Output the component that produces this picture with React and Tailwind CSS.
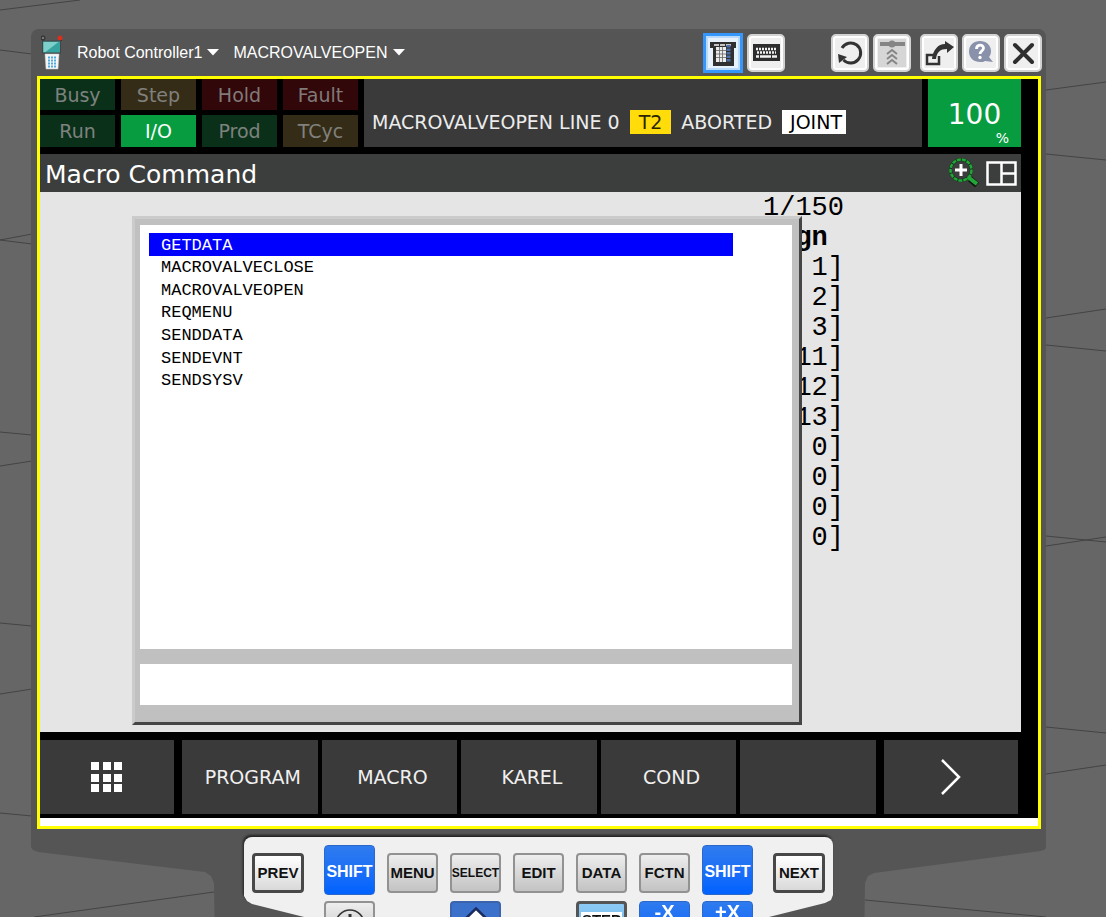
// App.jsx
import React from "react";

const INDICATORS = [
  { label: "Busy", tone: "bg-[#0b301a] text-[#7d827e]" },
  { label: "Step", tone: "bg-[#342c17] text-[#80807c]" },
  { label: "Hold", tone: "bg-[#320709] text-[#807a7a]" },
  { label: "Fault", tone: "bg-[#320709] text-[#807a7a]" },
  { label: "Run", tone: "bg-[#0b301a] text-[#7d827e]" },
  { label: "I/O", tone: "bg-[#089c40] text-white" },
  { label: "Prod", tone: "bg-[#0b301a] text-[#7d827e]" },
  { label: "TCyc", tone: "bg-[#342c17] text-[#80807c]" },
];

const PROGRAMS = [
  "GETDATA",
  "MACROVALVECLOSE",
  "MACROVALVEOPEN",
  "REQMENU",
  "SENDDATA",
  "SENDEVNT",
  "SENDSYSV",
];

const ASSIGNMENTS = [1, 2, 3, 11, 12, 13, 0, 0, 0, 0];

const SOFT_KEYS = ["PROGRAM", "MACRO", "KAREL", "COND", ""];

// Floor grid of the 3D cell behind the pendant
function FloorLines() {
  return (
    <svg
      className="absolute inset-0 h-full w-full"
      viewBox="0 0 1106 917"
      preserveAspectRatio="none"
      fill="none"
      stroke="#444"
      aria-hidden="true"
    >
      <path d="M0 10 80 0M0 50 32 54M0 240 32 234M0 240 32 244M0 432 32 435M0 466 32 461M0 623 32 626M0 694 32 689M0 813 32 816M34 917 214 892" />
      <path d="M1046 90 1106 82M1046 154 1106 160M1046 318 1106 309M1046 345 1106 351M1046 536 1106 542M1046 546 1106 537M1046 727 1106 733M1046 774 1106 765M865 900 1046 917" />
    </svg>
  );
}

function PendantIcon() {
  return (
    <svg width="22" height="36" viewBox="0 0 22 36" aria-hidden="true">
      <path d="M2 6V3M20 6V3" stroke="#333" strokeWidth="2" />
      <circle cx="2" cy="3" r="2" fill="#777" stroke="#222" />
      <circle cx="19" cy="3" r="2.5" fill="#d8301c" />
      <rect x="1.5" y="6" width="18" height="12" fill="#35a3a0" stroke="#444" />
      <path d="M2.5 7h15l-13 10h-2z" fill="#7ccfca" />
      <path d="M4 19h14l-1 15H5z" fill="#f4f6f8" stroke="#ccc" strokeWidth="0.5" />
      <path d="M7 22.5h8M7 25.5h8M7 28.5h8M7 31.5h8" stroke="#53a9de" strokeWidth="2" strokeDasharray="2 1" />
    </svg>
  );
}

function Caret() {
  return (
    <svg width="12" height="7" viewBox="0 0 12 7" fill="#fff" aria-hidden="true">
      <path d="M0 0h12L6 6.5z" />
    </svg>
  );
}

function ToolButton({ label, children }) {
  return (
    <button
      type="button"
      aria-label={label}
      className="flex size-[38px] items-center justify-center rounded-[5px] border-2 border-[#d2d2d2] bg-[#efefef] shadow-[inset_0_0_0_2px_#fff]"
    >
      {children}
    </button>
  );
}

function ToolIcon({ children }) {
  return (
    <svg width="30" height="30" viewBox="0 0 30 30" fill="none" className="shrink-0" aria-hidden="true">
      {children}
    </svg>
  );
}

function TitleBar() {
  return (
    <header className="flex h-[47px] items-center rounded-t-lg pr-1 pl-[10px] font-['Liberation_Sans',sans-serif] text-base text-white">
      <PendantIcon />
      <button type="button" className="ml-[14px] flex items-center gap-[5px] whitespace-nowrap">
        Robot Controller1
        <Caret />
      </button>
      <button type="button" className="ml-[14px] flex items-center gap-[5px] whitespace-nowrap">
        MACROVALVEOPEN
        <Caret />
      </button>

      <div className="ml-auto flex items-center gap-1">
        <button
          type="button"
          aria-label="Teach pendant"
          aria-pressed="true"
          className="flex size-10 items-center justify-center border-3 border-[#3596fb] bg-[#e6f1fc] shadow-[inset_0_0_0_2px_#b9dafa]"
        >
          <ToolIcon>
            <path d="M2 4h26v6h-2v18H5V10H2z" fill="#303030" />
            <path d="M6 7h18" stroke="#c4c4c4" strokeWidth="2" strokeDasharray="5 1" />
            <rect x="8" y="9" width="10" height="15" fill="#ececec" />
            <path d="M11.5 9v15M14.5 9v15M8 12.5h10M8 16h10M8 19.5h10" stroke="#666" strokeWidth="0.8" />
            <path d="M20.5 7v17" stroke="#4d6fa8" strokeWidth="4" strokeDasharray="2.5 1" />
          </ToolIcon>
        </button>
        <ToolButton label="Keyboard">
          <ToolIcon>
            <rect x="2" y="6" width="27" height="17" fill="#2e2e2e" />
            <path d="M5 11h21M6 14.5h19" stroke="#f2f2f2" strokeWidth="2.5" strokeDasharray="2 1" />
            <path d="M5 18.5h3M9 18.5h11M21 18.5h5" stroke="#f2f2f2" strokeWidth="2.5" />
          </ToolIcon>
        </ToolButton>

        <div className="ml-[42px] flex gap-1">
          <ToolButton label="Reset">
            <ToolIcon>
              <path d="M7 10a10 10 0 1 1 1.5 12" stroke="#333" strokeWidth="3" />
              <path d="M3 16l9 3-8 6z" fill="#333" />
            </ToolIcon>
          </ToolButton>
          <ToolButton label="Hide panel">
            <ToolIcon>
              <path d="M1 1h28v28H1z" fill="#d6d6d6" />
              <path d="M3 6h25" stroke="#858585" strokeWidth="4" />
              <circle cx="15" cy="6" r="3.5" fill="#858585" />
              <path d="M10 16l5-4 5 4M10 21l5-4 5 4M10 26l5-4 5 4" stroke="#858585" strokeWidth="2" />
            </ToolIcon>
          </ToolButton>
        </div>

        <div className="ml-[5px] flex gap-1">
          <ToolButton label="Undock">
            <ToolIcon>
              <path d="M15 18v8H3V17h7" stroke="#333" strokeWidth="2.5" />
              <path d="M8 21C9 12 14 6 21 6V3l9 6-7 6v-4c-7 0-10 3-11 10z" fill="#333" />
            </ToolIcon>
          </ToolButton>
          <ToolButton label="Help">
            <ToolIcon>
              <path d="M14 3c6 0 11 4 11 10 0 3-1 5-2 6l4 5-8-1c-1 1-3 1-5 1C8 24 3 20 3 13.5 3 7 8 3 14 3z" fill="#8a92ab" />
              <path d="M10.5 11c0-5 7-5 7-1 0 3-3.5 3-3.5 6" stroke="#fff" strokeWidth="2.8" />
              <circle cx="14" cy="19.5" r="1.7" fill="#fff" />
            </ToolIcon>
          </ToolButton>
          <ToolButton label="Close">
            <ToolIcon>
              <path d="M7 7l17 17M24 7 7 24" stroke="#2e2e2e" strokeWidth="4" strokeLinecap="round" />
            </ToolIcon>
          </ToolButton>
        </div>
      </div>
    </header>
  );
}

function StatusBar() {
  return (
    <div className="flex gap-1.5 pr-[17px] pb-[7px]">
      <div className="grid grid-cols-[repeat(4,75px)] grid-rows-[31px_32px] gap-x-1.5 gap-y-[5px]">
        {INDICATORS.map(({ label, tone }) => (
          <div key={label} className={`flex items-center justify-center text-[19px] leading-6 ${tone}`}>
            {label}
          </div>
        ))}
      </div>

      <div className="flex min-w-0 flex-1 items-center gap-2.5 bg-[#3a3a3a] pt-[18px] pl-2 text-[19px] leading-6 whitespace-nowrap text-[#ececec]">
        <span>MACROVALVEOPEN LINE 0</span>
        <span className="bg-[#ffdc0a] px-[9px] text-[#2a2500]">T2</span>
        <span>ABORTED</span>
        <span className="bg-white pr-1 pl-2 text-black">JOINT</span>
      </div>

      <div className="flex w-[93px] flex-col bg-[#089c40] pt-[21px] text-white">
        <span className="text-center text-[28px] leading-[29px]">100</span>
        <span className="pr-3 text-right text-sm leading-[18px]">%</span>
      </div>
    </div>
  );
}

function ScreenTitle() {
  return (
    <div className="mr-[17px] flex h-[38px] items-center bg-[#3c3e3d] pr-1 pl-[5px]">
      <h1 className="pt-1 text-[25px] leading-8 text-white">Macro Command</h1>
      <button type="button" aria-label="Zoom" className="ml-auto">
        <svg width="32" height="32" viewBox="0 0 32 32" fill="none" aria-hidden="true">
          <path d="M22 22l7 6" stroke="#0c160e" strokeWidth="6" />
          <circle cx="13" cy="13" r="10.5" stroke="#10341a" strokeWidth="3" />
          <circle cx="13" cy="13" r="10.5" stroke="#23a638" strokeWidth="2.5" strokeDasharray="4 1" />
          <path d="M20 20l9 7" stroke="#23a638" strokeWidth="4" />
          <path d="M13 7v12M7 13h12" stroke="#fff" strokeWidth="3" />
        </svg>
      </button>
      <button type="button" aria-label="Split window" className="ml-1.5">
        <svg width="31" height="25" viewBox="0 0 31 25" fill="none" stroke="#fff" strokeWidth="2.5" aria-hidden="true">
          <path d="M1.5 1.5h28v22h-28zM15.5 1.5v22M15.5 12.5h14" />
        </svg>
      </button>
    </div>
  );
}

function MacroTable() {
  return (
    <div className="col-start-1 row-start-1 flex flex-col items-end pt-px pr-[177px] font-['Liberation_Mono',monospace] text-[27px] leading-[30px] whitespace-pre text-black">
      <p>1/150</p>
      <table>
        <thead>
          <tr>
            <th className="p-0 text-right font-bold">{"Assign "}</th>
          </tr>
        </thead>
        <tbody>
          {ASSIGNMENTS.map((n, i) => (
            <tr key={i}>
              <td className="p-0 text-right">{`[${String(n).padStart(3)}]`}</td>
            </tr>
          ))}
        </tbody>
      </table>
    </div>
  );
}

function ProgramPicker() {
  return (
    <section
      aria-label="Program list"
      className="z-10 col-start-1 row-start-1 mt-6 mr-[219px] mb-[7px] ml-[92px] flex flex-col gap-[15px] border-3 border-t-[#cbcbcb] border-r-[#454545] border-b-[#454545] border-l-[#cbcbcb] bg-[#c0c0c0] pt-1.5 pr-[7px] pb-[17px] pl-[5px]"
    >
      <div className="h-[424px] bg-white pt-2 pr-[59px] pl-[9px]">
        <ul className="grid h-[158px] auto-rows-fr font-['Liberation_Mono',monospace] text-[17px] leading-[18px] text-black">
          {PROGRAMS.map((name, i) => (
            <li key={name} className="flex">
              <button
                type="button"
                className={`flex-1 pt-[3px] pl-3 text-left ${i === 0 ? "bg-[#0000ff] text-white" : ""}`}
              >
                {name}
              </button>
            </li>
          ))}
        </ul>
      </div>
      <input
        type="text"
        aria-label="Program name"
        className="h-[41px] w-full bg-white px-3 font-['Liberation_Mono',monospace] text-[17px] outline-none"
      />
    </section>
  );
}

function SoftKeys() {
  return (
    <nav className="flex h-[86px] gap-2 pt-2 pr-5 pb-1 text-[19px] text-[#f0f0f0]">
      <button type="button" aria-label="Menu grid" className="flex w-[134px] items-center justify-center bg-[#3a3a3a]">
        <svg width="32" height="32" viewBox="0 0 32 32" fill="#fff" aria-hidden="true">
          <path d="M0 1h8v8H0zM12 1h8v8h-8zM23 1h8v8h-8zM0 13h8v8H0zM12 13h8v8h-8zM23 13h8v8h-8zM0 23h8v8H0zM12 23h8v8h-8zM23 23h8v8h-8z" />
        </svg>
      </button>
      <div className="grid flex-1 grid-cols-5 gap-1">
        {SOFT_KEYS.map((label, i) => (
          <button key={i} type="button" aria-label={label || "Unassigned"} className="bg-[#3a3a3a] pl-1.5">
            {label}
          </button>
        ))}
      </div>
      <button type="button" aria-label="Next page" className="flex w-[134px] items-center justify-center bg-[#3a3a3a]">
        <svg width="22" height="36" viewBox="0 0 22 36" fill="none" stroke="#fff" strokeWidth="2.5" aria-hidden="true">
          <path d="M2 1l17 17L2 35" />
        </svg>
      </button>
    </nav>
  );
}

function GreyKey({ children, small }) {
  return (
    <button
      type="button"
      className={`mt-2 flex h-10 items-center justify-center rounded border-2 border-[#929292] bg-linear-to-b from-[#eeeeee] to-[#c3c3c3] text-[#111] ${small ? "text-xs" : "text-[15px]"}`}
    >
      {children}
    </button>
  );
}

function OutlinedKey({ children }) {
  return (
    <button
      type="button"
      className="h-10 w-[52px] rounded border-3 border-[#484848] bg-linear-to-b from-white to-[#d9d9d9] text-[15px] text-[#111]"
    >
      {children}
    </button>
  );
}

function BlueKey({ children }) {
  return (
    <button
      type="button"
      className="h-[50px] rounded border border-[#2a68cc] bg-linear-to-b from-[#2f7bee] to-[#0062ff] pt-1 text-base text-white"
    >
      {children}
    </button>
  );
}

function JogKey({ children }) {
  return (
    <button
      type="button"
      className="flex h-10 justify-center rounded border border-[#2a68cc] bg-linear-to-b from-[#2f7bee] to-[#0062ff] text-xl leading-5 text-white"
    >
      {children}
    </button>
  );
}

function Keypad() {
  return (
    <div className="mx-auto w-fit drop-shadow-[-1px_-2px_1px_#222]">
      <div className="grid h-28 grid-cols-[60px_repeat(7,51px)_60px] content-start gap-x-3 gap-y-1.5 rounded-t-lg bg-[#f0f0f0] px-2 pt-2 font-['Liberation_Sans',sans-serif] font-bold [clip-path:polygon(0_0,100%_0,100%_58px,calc(100%-2px)_63px,calc(100%-8px)_66px,calc(100%-64px)_80px,calc(100%-64px)_100%,60px_100%,60px_80px,8px_67px,3px_64px,0_59px)]">
        <div className="pt-2">
          <OutlinedKey>PREV</OutlinedKey>
        </div>
        <BlueKey>SHIFT</BlueKey>
        <GreyKey>MENU</GreyKey>
        <GreyKey small>SELECT</GreyKey>
        <GreyKey>EDIT</GreyKey>
        <GreyKey>DATA</GreyKey>
        <GreyKey>FCTN</GreyKey>
        <BlueKey>SHIFT</BlueKey>
        <div className="pt-2 text-right">
          <OutlinedKey>NEXT</OutlinedKey>
        </div>

        <button
          type="button"
          aria-label="Info"
          className="col-start-2 flex h-10 justify-center rounded border-2 border-[#929292] bg-linear-to-b from-[#eeeeee] to-[#c3c3c3] pt-1.5"
        >
          <svg width="30" height="30" viewBox="0 0 30 30" fill="none" stroke="#333" strokeWidth="1.5" aria-hidden="true">
            <circle cx="15" cy="15" r="14" />
            <path d="M15 5v9" strokeWidth="3" />
          </svg>
        </button>
        <button
          type="button"
          aria-label="Up"
          className="col-start-4 flex h-10 justify-center rounded border-2 border-[#3c64ac] bg-[#3b70cb] pt-1"
        >
          <svg width="34" height="34" viewBox="0 0 34 34" fill="#fff" stroke="#1b2c60" strokeWidth="2.5" aria-hidden="true">
            <path d="M17 1.5 33 17H24v15H10V17H1z" />
          </svg>
        </button>
        <button
          type="button"
          className="col-start-6 flex h-10 items-start justify-center rounded border-3 border-[#555] bg-linear-to-b from-[#8ccaf5] to-[#6ab4ea] pt-2 text-[15px] leading-4 text-[#111]"
        >
          <span className="bg-white px-px">STEP</span>
        </button>
        <JogKey>-X</JogKey>
        <JogKey>+X</JogKey>
      </div>
    </div>
  );
}

export default function App() {
  return (
    <div className="relative h-screen overflow-hidden bg-[#666666] pt-[29px] font-['DejaVu_Sans',Verdana,sans-serif]">
      <FloorLines />

      <main className="relative mr-[60px] ml-[31px]">
        <div className="rounded-t-lg bg-[#555555]">
          <TitleBar />
          <div className="mr-[5px] ml-1.5 border-3 border-[#ffff00] bg-black">
            <StatusBar />
            <ScreenTitle />
            <div className="mr-[17px] grid bg-[#e5e5e5]">
              <MacroTable />
              <ProgramPicker />
            </div>
            <SoftKeys />
            <div className="h-2 bg-white" />
          </div>
        </div>

        {/* Tapered lower half of the housing */}
        <div className="bg-[#555555] pt-2 [clip-path:polygon(0_0,100%_0,100%_19px,calc(100%-2px)_21px,calc(100%-6px)_22px,calc(100%-172px)_44px,calc(100%-178px)_47px,calc(100%-181px)_54px,calc(100%-182px)_100%,184px_100%,183px_54px,180px_47px,174px_43px,7px_23px,2px_21px,0_18px)]">
          <Keypad />
        </div>
      </main>
    </div>
  );
}
